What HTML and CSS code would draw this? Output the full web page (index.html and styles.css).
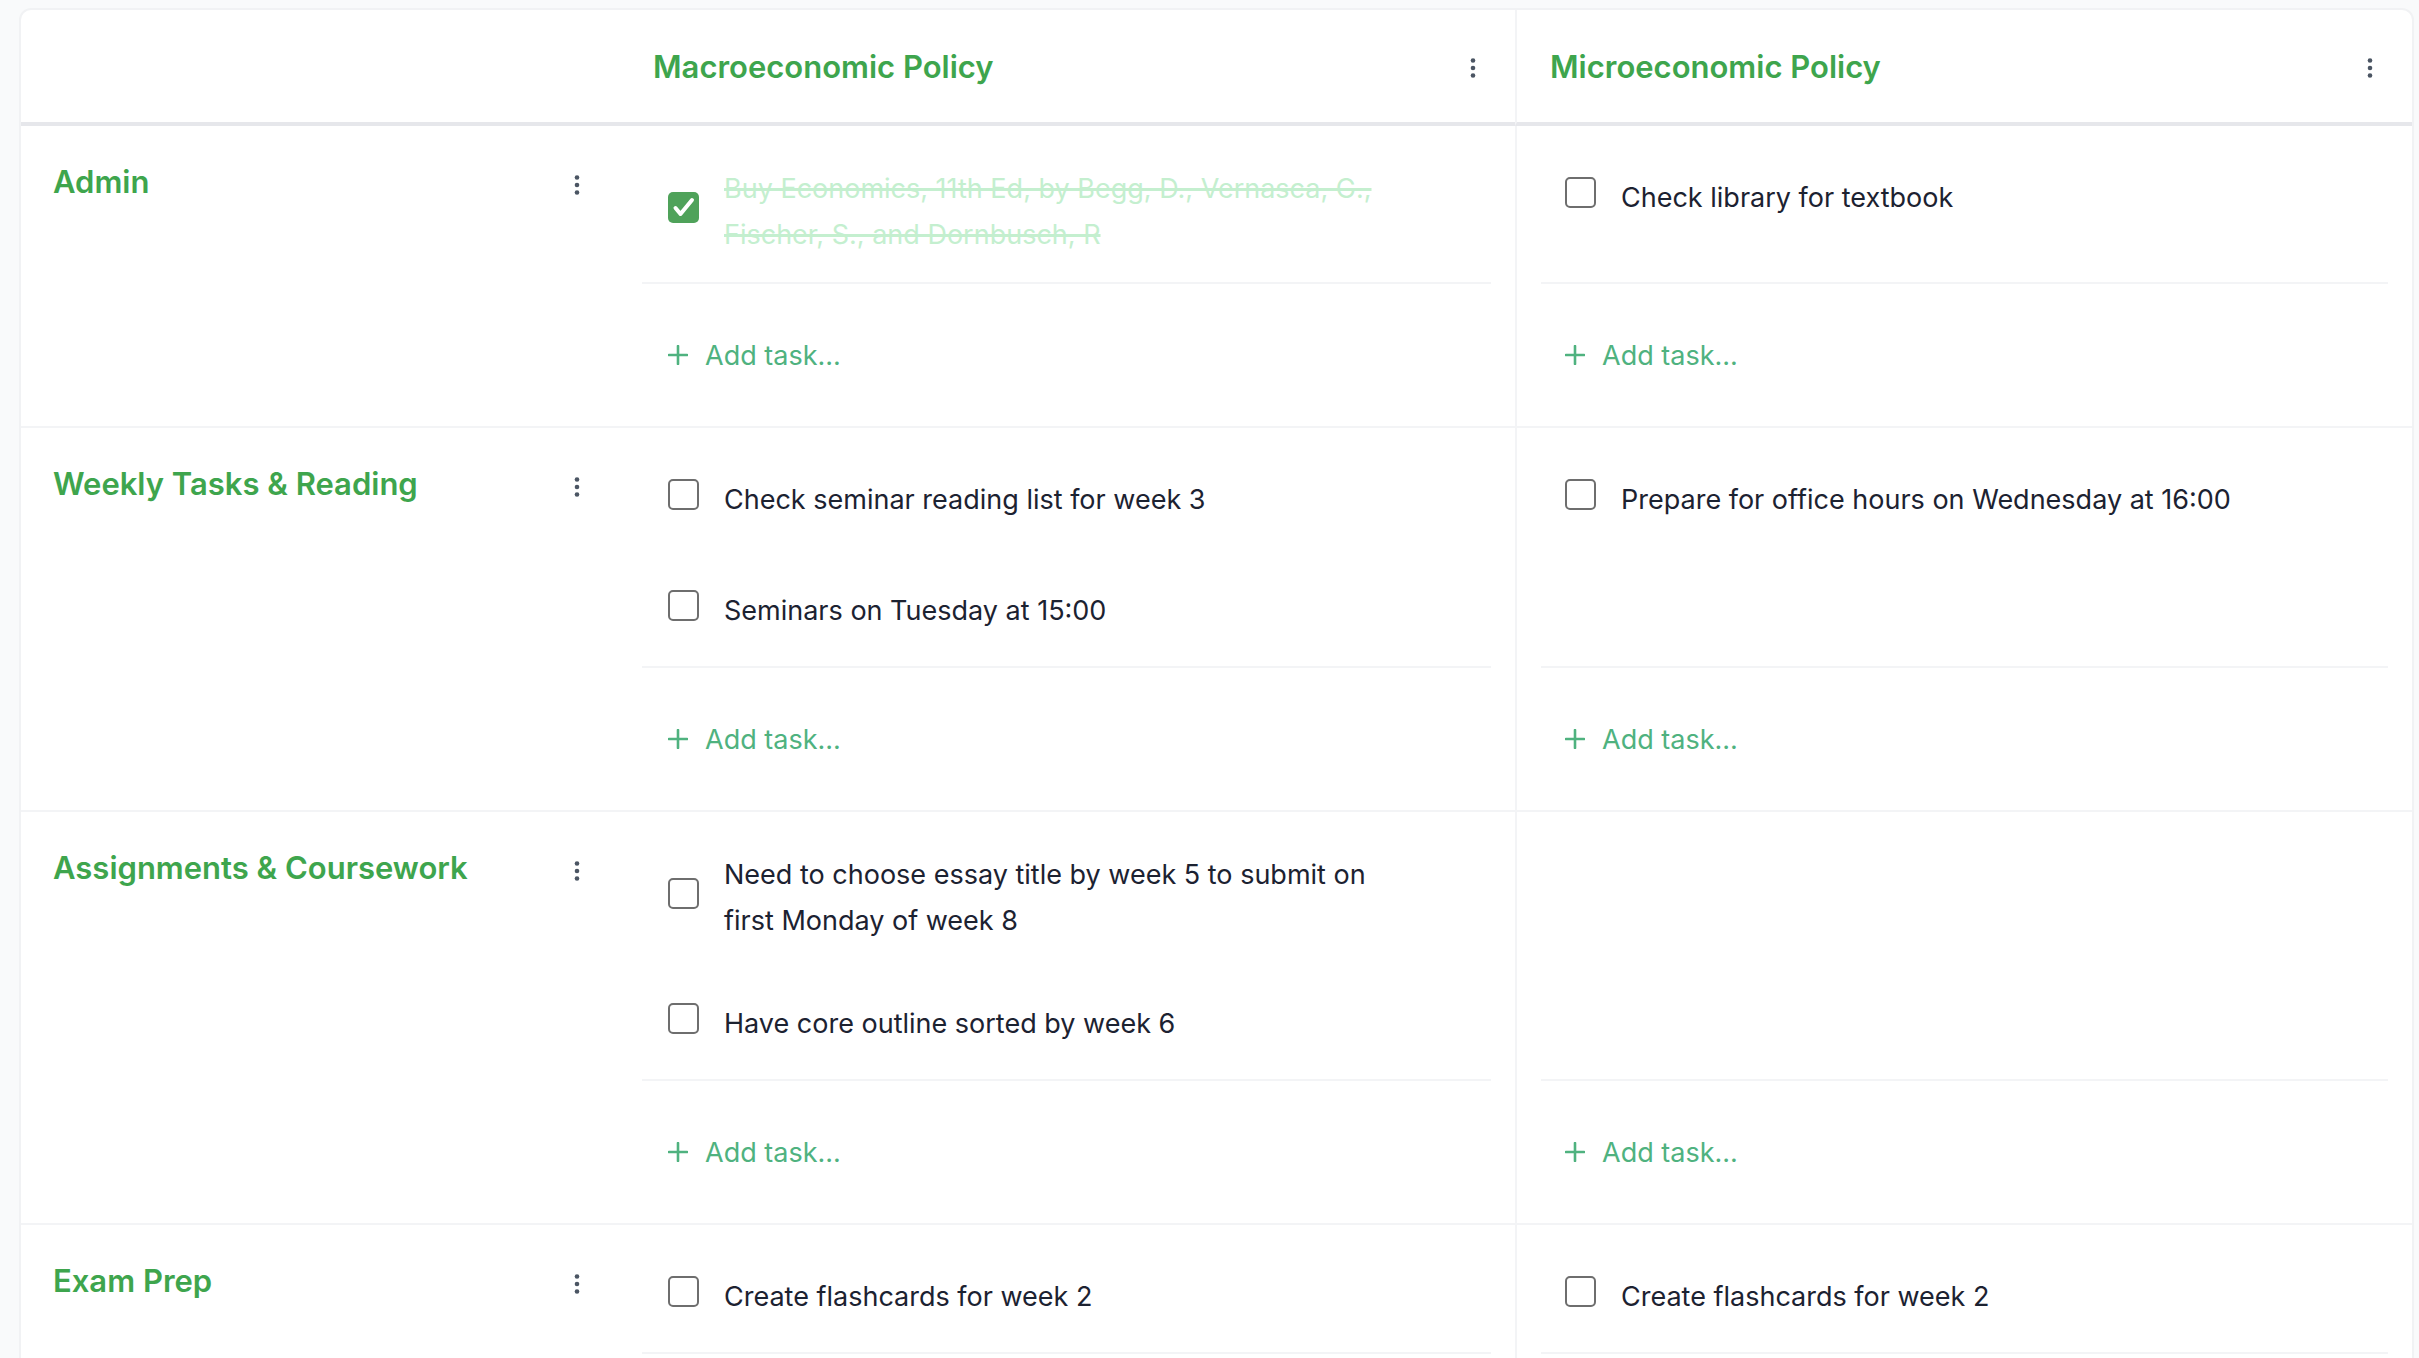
FILE: index.html
```html
<!DOCTYPE html>
<html lang="en">
<head>
<meta charset="utf-8">
<title>Course board</title>
<link rel="stylesheet" href="styles.css">
</head>
<body>
<div class="board">
  <div class="grid">
    <div class="head corner"></div>
    <div class="head col">
      <span class="col-title">Macroeconomic Policy</span>
      <span class="dots"><svg width="6" height="20" viewBox="0 0 6 20"><circle cx="3" cy="2.5" r="2.3"/><circle cx="3" cy="10" r="2.3"/><circle cx="3" cy="17.5" r="2.3"/></svg></span>
    </div>
    <div class="head col micro">
      <span class="col-title">Microeconomic Policy</span>
      <span class="dots"><svg width="6" height="20" viewBox="0 0 6 20"><circle cx="3" cy="2.5" r="2.3"/><circle cx="3" cy="10" r="2.3"/><circle cx="3" cy="17.5" r="2.3"/></svg></span>
    </div>

    <!-- Admin -->
    <div class="label">
      <span class="label-title">Admin</span>
      <span class="dots"><svg width="6" height="20" viewBox="0 0 6 20"><circle cx="3" cy="2.5" r="2.3"/><circle cx="3" cy="10" r="2.3"/><circle cx="3" cy="17.5" r="2.3"/></svg></span>
    </div>
    <div class="cell">
      <ul class="tasks">
        <li class="task done">
          <span class="box checked"><svg width="31" height="31" viewBox="0 0 31 31"><path d="M7.5 16 L12.5 22 L24 8" fill="none" stroke="#fff" stroke-width="4" stroke-linecap="round" stroke-linejoin="round"/></svg></span>
          <span class="task-text">Buy Economics, 11th Ed, by Begg, D., Vernasca, G., Fischer, S., and Dornbusch, R</span>
        </li>
      </ul>
      <div class="add"><svg width="20" height="20" viewBox="0 0 20 20"><path d="M10 1 V19 M1 10 H19" stroke="#4fb27f" stroke-width="2.6" stroke-linecap="round"/></svg><span>Add task...</span></div>
    </div>
    <div class="cell micro">
      <ul class="tasks">
        <li class="task"><span class="box"></span><span class="task-text">Check library for textbook</span></li>
      </ul>
      <div class="add"><svg width="20" height="20" viewBox="0 0 20 20"><path d="M10 1 V19 M1 10 H19" stroke="#4fb27f" stroke-width="2.6" stroke-linecap="round"/></svg><span>Add task...</span></div>
    </div>

    <!-- Weekly -->
    <div class="label">
      <span class="label-title">Weekly Tasks &amp; Reading</span>
      <span class="dots"><svg width="6" height="20" viewBox="0 0 6 20"><circle cx="3" cy="2.5" r="2.3"/><circle cx="3" cy="10" r="2.3"/><circle cx="3" cy="17.5" r="2.3"/></svg></span>
    </div>
    <div class="cell">
      <ul class="tasks">
        <li class="task"><span class="box"></span><span class="task-text">Check seminar reading list for week 3</span></li>
        <li class="task"><span class="box"></span><span class="task-text">Seminars on Tuesday at 15:00</span></li>
      </ul>
      <div class="add"><svg width="20" height="20" viewBox="0 0 20 20"><path d="M10 1 V19 M1 10 H19" stroke="#4fb27f" stroke-width="2.6" stroke-linecap="round"/></svg><span>Add task...</span></div>
    </div>
    <div class="cell micro">
      <ul class="tasks">
        <li class="task"><span class="box"></span><span class="task-text">Prepare for office hours on Wednesday at 16:00</span></li>
      </ul>
      <div class="add"><svg width="20" height="20" viewBox="0 0 20 20"><path d="M10 1 V19 M1 10 H19" stroke="#4fb27f" stroke-width="2.6" stroke-linecap="round"/></svg><span>Add task...</span></div>
    </div>

    <!-- Assignments -->
    <div class="label">
      <span class="label-title">Assignments &amp; Coursework</span>
      <span class="dots"><svg width="6" height="20" viewBox="0 0 6 20"><circle cx="3" cy="2.5" r="2.3"/><circle cx="3" cy="10" r="2.3"/><circle cx="3" cy="17.5" r="2.3"/></svg></span>
    </div>
    <div class="cell">
      <ul class="tasks">
        <li class="task"><span class="box"></span><span class="task-text">Need to choose essay title by week 5 to submit on first Monday of week 8</span></li>
        <li class="task"><span class="box"></span><span class="task-text">Have core outline sorted by week 6</span></li>
      </ul>
      <div class="add"><svg width="20" height="20" viewBox="0 0 20 20"><path d="M10 1 V19 M1 10 H19" stroke="#4fb27f" stroke-width="2.6" stroke-linecap="round"/></svg><span>Add task...</span></div>
    </div>
    <div class="cell micro">
      <ul class="tasks"></ul>
      <div class="add"><svg width="20" height="20" viewBox="0 0 20 20"><path d="M10 1 V19 M1 10 H19" stroke="#4fb27f" stroke-width="2.6" stroke-linecap="round"/></svg><span>Add task...</span></div>
    </div>

    <!-- Exam Prep -->
    <div class="label">
      <span class="label-title">Exam Prep</span>
      <span class="dots"><svg width="6" height="20" viewBox="0 0 6 20"><circle cx="3" cy="2.5" r="2.3"/><circle cx="3" cy="10" r="2.3"/><circle cx="3" cy="17.5" r="2.3"/></svg></span>
    </div>
    <div class="cell">
      <ul class="tasks">
        <li class="task"><span class="box"></span><span class="task-text">Create flashcards for week 2</span></li>
      </ul>
      <div class="add"><svg width="20" height="20" viewBox="0 0 20 20"><path d="M10 1 V19 M1 10 H19" stroke="#4fb27f" stroke-width="2.6" stroke-linecap="round"/></svg><span>Add task...</span></div>
    </div>
    <div class="cell micro">
      <ul class="tasks">
        <li class="task"><span class="box"></span><span class="task-text">Create flashcards for week 2</span></li>
      </ul>
      <div class="add"><svg width="20" height="20" viewBox="0 0 20 20"><path d="M10 1 V19 M1 10 H19" stroke="#4fb27f" stroke-width="2.6" stroke-linecap="round"/></svg><span>Add task...</span></div>
    </div>
  </div>
</div>
</body>
</html>
```

FILE: styles.css
```css
* { box-sizing: border-box; }

html, body {
  margin: 0;
  padding: 0;
  background: #f9fafb;
  font-family: Inter, "Noto Sans", "Liberation Sans", sans-serif;
  color: #1f2533;
}

.board {
  margin: 8px 5px 0 19px;
  background: #ffffff;
  border: 2px solid #f1f2f4;
  border-radius: 12px 12px 0 0;
  overflow: hidden;
}

.grid {
  display: grid;
  grid-template-columns: 597px 1fr 1fr;
}

.head {
  height: 116px;
  border-bottom: 4px solid #e6e7eb;
  display: flex;
  align-items: center;
  justify-content: space-between;
}

.head.col {
  padding: 0 38px 0 35px;
}

.head.col.micro {
  padding: 0 38px 0 33px;
}

.head .dots {
  margin-top: 4px;
}

.micro {
  border-left: 2px solid #f3f4f6;
}

.col-title {
  font-size: 31px;
  font-weight: 600;
  color: #3ea54d;
  letter-spacing: 0;
}

.dots {
  display: flex;
  align-items: center;
  justify-content: center;
  width: 8px;
}

.dots svg { fill: #4b5563; display: block; }

.label {
  display: flex;
  align-items: flex-start;
  justify-content: space-between;
  padding: 37px 37px 0 32px;
  border-bottom: 2px solid #f3f4f6;
}

.label .dots {
  margin-top: 12px;
}

.label-title {
  font-size: 31px;
  line-height: 38px;
  font-weight: 600;
  color: #3ea54d;
  letter-spacing: 0;
}

.cell {
  display: flex;
  flex-direction: column;
  padding: 0 24px;
  border-bottom: 2px solid #f3f4f6;
}

.tasks {
  list-style: none;
  margin: 0;
  padding: 16px 0 0 0;
  flex: 1;
}

.task {
  display: flex;
  align-items: center;
  gap: 25px;
  min-height: 111px;
  padding: 24px 70px 24px 26px;
}

.micro .task {
  padding-left: 24px;
}

.box {
  flex: none;
  width: 31px;
  height: 31px;
  border: 2px solid #6e6e6e;
  border-radius: 5px;
  background: #fff;
  margin-bottom: 10px;
}

.box.checked {
  border: none;
  background: #4fa25a;
}

.box svg { display: block; }

.task-text {
  font-size: 27px;
  line-height: 46px;
  color: #1c2231;
}

.task.done .task-text {
  color: #c4efcf;
  text-decoration: line-through;
  text-decoration-color: #c4efcf;
  text-decoration-thickness: 3px;
}

.add {
  display: flex;
  align-items: center;
  gap: 17px;
  height: 144px;
  padding-left: 26px;
  border-top: 2px solid #f3f4f6;
  font-size: 27px;
  color: #4fb27f;
}

.micro .add {
  padding-left: 24px;
}

.add svg { display: block; flex: none; }
```
